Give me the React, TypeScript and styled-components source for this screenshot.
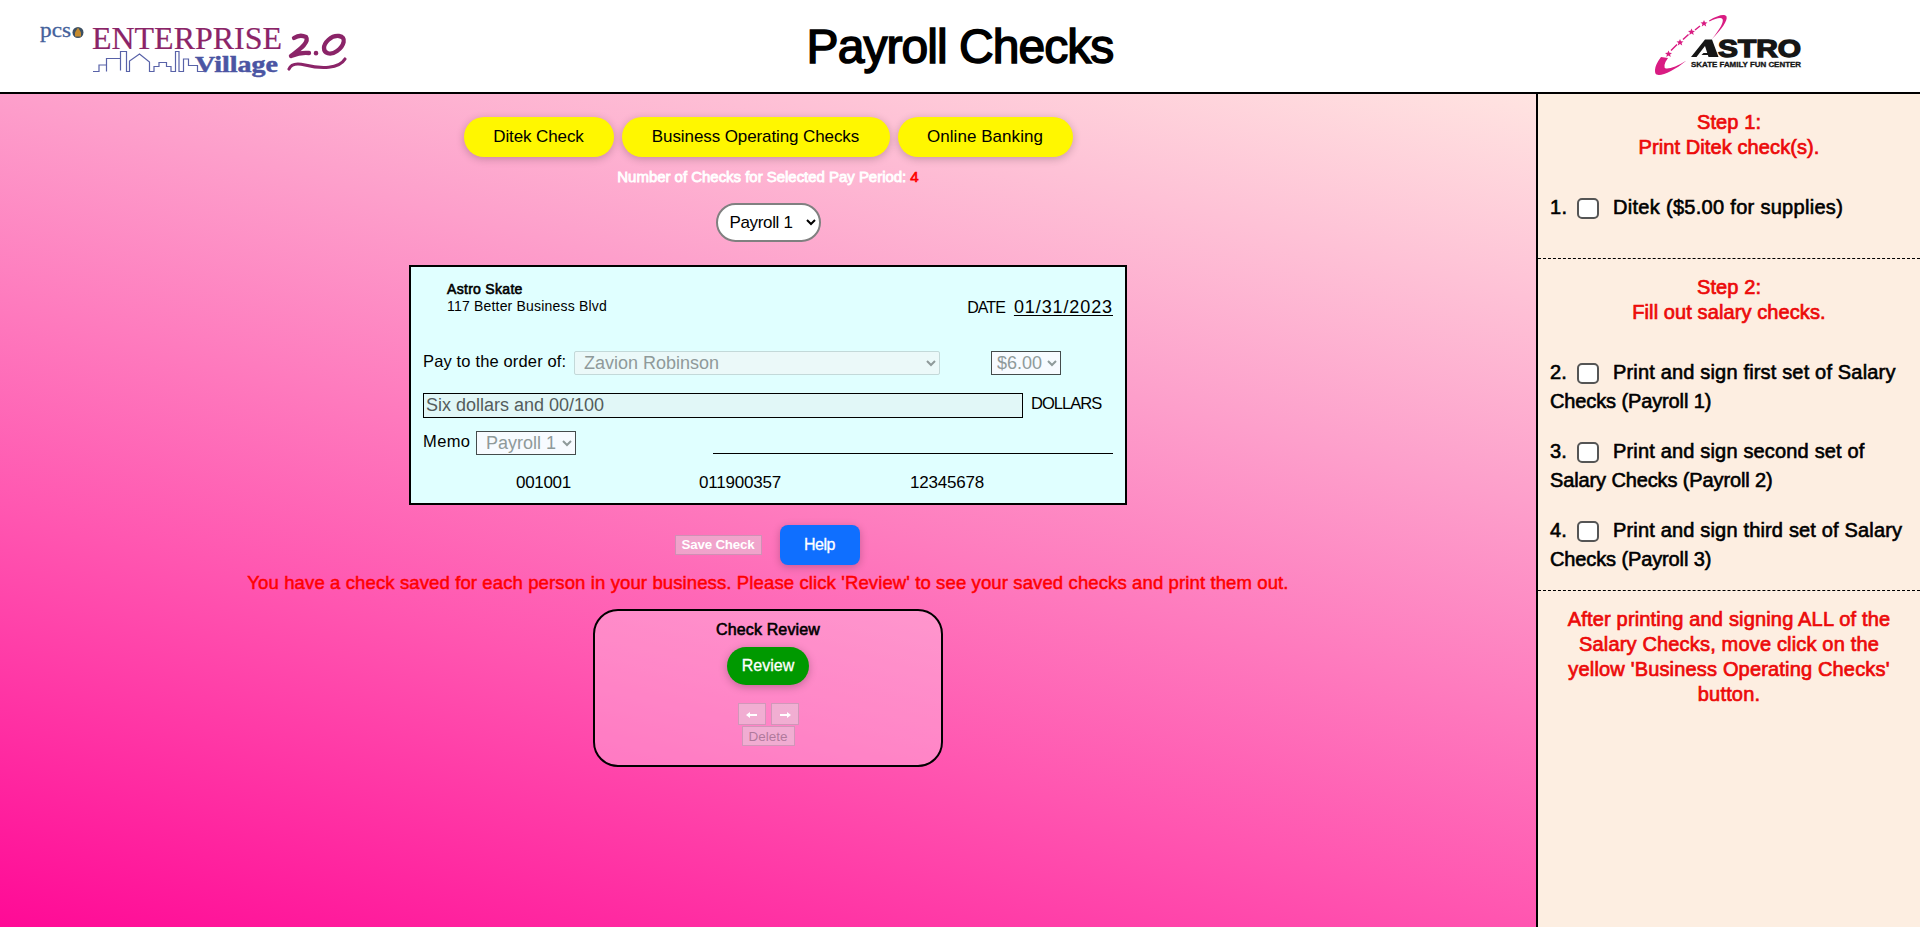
import React from 'react';
import styled, { createGlobalStyle } from 'styled-components';

const Global = createGlobalStyle`
  * { box-sizing: border-box; }
  body { margin: 0; font-family: "Liberation Sans", Arial, sans-serif; color: #000; }
  button, select, input { font-family: inherit; margin: 0; }
`;

const Page = styled.div`
  height: 927px;
  display: flex;
  flex-direction: column;
  overflow: hidden;
`;
const Header = styled.header`
  height: 94px;
  flex: none;
  background: #fff;
  border-bottom: 2px solid #000;
  display: grid;
  grid-template-columns: 400px 1fr 400px;
`;
const Title = styled.h1`
  margin: 0;
  text-align: center;
  font-size: 48px;
  line-height: 94px;
  font-weight: 400;
  letter-spacing: -0.95px;
  -webkit-text-stroke: 1.5px #000;
`;
const Body = styled.div`
  flex: 1;
  display: grid;
  grid-template-columns: 1536px 1fr;
`;
const Main = styled.main`
  background: linear-gradient(15deg, #ff0a96 0%, #ff55b0 33%, #fd9fcb 67%, #ffe4e1 100%);
  display: flex;
  flex-direction: column;
  align-items: center;
`;
const TopButtons = styled.div`
  display: flex;
  gap: 8px;
  margin-top: 23px;
`;
const Pill = styled.button<{ $w: number; $ls: number }>`
  width: ${p => p.$w}px;
  height: 40px;
  padding: 0;
  border: 0;
  border-radius: 20px;
  background: #fff700;
  color: #000;
  font-size: 17px;
  letter-spacing: ${p => p.$ls}px;
  box-shadow: 0 2px 8px rgba(0, 0, 0, 0.22);
  white-space: nowrap;
`;
const Count = styled.div`
  margin-top: 9px;
  height: 22px;
  line-height: 22px;
  font-size: 15px;
  letter-spacing: -0.03px;
  color: #fff;
  -webkit-text-stroke: 0.8px currentColor;
  white-space: nowrap;
  span { color: red; -webkit-text-stroke: 0.7px red; }
`;
const PeriodSelect = styled.select`
  margin-top: 15px;
  width: 105px;
  height: 39px;
  border: 2px solid #808080;
  border-radius: 20px;
  background: #fff;
  font-size: 17px;
  letter-spacing: -0.35px;
  padding: 0 0 0 8px;
  color: #000;
`;
const Check = styled.section`
  margin-top: 23px;
  width: 718px;
  height: 240px;
  border: 2px solid #000;
  background: #e0ffff;
  padding: 14px 12px 0;
  display: flex;
  flex-direction: column;
`;
const Row = styled.div<{ $h: number; $mt?: number }>`
  display: flex;
  align-items: flex-start;
  height: ${p => p.$h}px;
  margin-top: ${p => p.$mt ?? 0}px;
  flex: none;
`;
const Payer = styled.div`
  padding-left: 24px;
  font-size: 14px;
  line-height: 17px;
  letter-spacing: 0.19px;
  flex: 1;
  strong { display: block; font-weight: 400; letter-spacing: 0.3px; -webkit-text-stroke: 0.6px #000; }
`;
const DateBox = styled.div`
  padding-top: 16px;
  font-size: 17px;
  line-height: 20px;
  white-space: nowrap;
  small { font-size: 16px; letter-spacing: -0.95px; margin-right: 9px; }
  u { font-size: 18px; text-underline-offset: 2px; letter-spacing: 0.9px; }
`;
const Label = styled.span<{ $w: number; $ls: number }>`
  width: ${p => p.$w}px;
  flex: none;
  font-size: 16.5px;
  line-height: 20px;
  letter-spacing: ${p => p.$ls}px;
  white-space: nowrap;
`;
const Field = styled.select<{ $w: number; $plain?: boolean; $pad: number; $ml?: number }>`
  width: ${p => p.$w}px;
  height: 24px;
  margin-left: ${p => p.$ml ?? 0}px;
  padding: 0 0 0 ${p => p.$pad}px;
  border: 1px solid ${p => (p.$plain ? '#c3d9d9' : '#444c4c')};
  border-radius: ${p => (p.$plain ? 2 : 0)}px;
  background: ${p => (p.$plain ? '#ebf9f9' : '#f7fbff')};
  font-size: 18px;
  color: #8f9a9a;
  opacity: 1;
`;
const Words = styled.input`
  width: 600px;
  height: 25px;
  border: 1px solid #000;
  background: #e1f7f7;
  padding: 0 2px;
  font-size: 18px;
  color: #545c5c;
  margin-right: 8px;
`;
const Signature = styled.div`
  flex: 1;
  height: 23px;
  margin-left: 137px;
  border-bottom: 1px solid #000;
`;
const Numbers = styled.div`
  display: flex;
  margin-top: 18px;
  font-size: 17px;
  line-height: 20px;
  letter-spacing: -0.2px;
  span:nth-child(1) { width: 183px; margin-left: 93px; letter-spacing: -0.3px; }
  span:nth-child(2) { width: 211px; }
`;
const Actions = styled.div`
  display: flex;
  align-items: center;
  gap: 18px;
  margin: 19px 2px 0 0;
  height: 41px;
`;
const Muted = styled.button<{ $w: number; $h: number; $strong?: boolean }>`
  width: ${p => p.$w}px;
  height: ${p => p.$h}px;
  padding: 0;
  display: flex;
  align-items: center;
  justify-content: center;
  border: 1px solid rgba(150, 110, 140, 0.35);
  background: rgba(225, 225, 225, 0.45);
  color: ${p => (p.$strong ? '#fff' : 'rgba(110, 70, 100, 0.5)')};
  font-size: ${p => (p.$strong ? 13.33 : 13.5)}px;
  letter-spacing: ${p => (p.$strong ? -0.2 : 0)}px;
  font-weight: ${p => (p.$strong ? 700 : 400)};
`;
const Help = styled.button`
  width: 80px;
  height: 40px;
  border: 0;
  border-radius: 8px;
  background: #0f6fff;
  color: #fff;
  font-size: 16px;
  letter-spacing: -0.5px;
  -webkit-text-stroke: 0.3px #fff;
  box-shadow: 0 2px 8px rgba(0, 0, 0, 0.22);
`;
const Message = styled.div`
  margin-top: 5px;
  height: 26px;
  line-height: 26px;
  color: red;
  font-size: 18.5px;
  -webkit-text-stroke: 0.5px red;
  letter-spacing: 0.12px;
  white-space: nowrap;
`;
const Review = styled.section`
  margin-top: 13px;
  width: 350px;
  height: 158px;
  border: 2px solid #000;
  border-radius: 25px;
  background: rgba(255, 220, 240, 0.35);
  display: flex;
  flex-direction: column;
  align-items: center;
`;
const ReviewTitle = styled.div`
  margin-top: 8px;
  line-height: 22px;
  font-size: 16px;
  letter-spacing: 0.15px;
  -webkit-text-stroke: 0.6px #000;
`;
const ReviewButton = styled.button`
  margin-top: 6px;
  width: 82px;
  height: 38px;
  border: 0;
  border-radius: 19px;
  background: #009900;
  color: #fff;
  font-size: 16px;
  -webkit-text-stroke: 0.3px #fff;
  box-shadow: 0 2px 8px rgba(0, 0, 0, 0.25);
`;
const Arrows = styled.div`
  display: flex;
  gap: 5px;
  margin: 18px 0 1px;
`;
const Aside = styled.aside`
  background: #fdeee1;
  border-left: 2px solid #000;
`;
const Section = styled.section<{ $h?: number }>`
  height: ${p => (p.$h ? p.$h + 'px' : 'auto')};
  padding: 16px 12px 0 12px;
  border-bottom: ${p => (p.$h ? '1px dashed #000' : '0')};
`;
const StepTitle = styled.h2<{ $ls: number }>`
  margin: 0;
  text-align: center;
  color: #ec0a0a;
  font-size: 20px;
  line-height: 25px;
  font-weight: 400;
  letter-spacing: ${p => p.$ls}px;
  -webkit-text-stroke: 0.7px #ec0a0a;
  white-space: nowrap;
`;
const Task = styled.div<{ $mt: number; $ls?: number }>`
  margin-top: ${p => p.$mt}px;
  height: 58px;
  font-size: 20px;
  line-height: 29px;
  letter-spacing: ${p => p.$ls ?? 0}px;
  -webkit-text-stroke: 0.6px #000;
  white-space: nowrap;
`;
const TaskLine = styled.div<{ $ls: number }>`
  display: flex;
  align-items: center;
  letter-spacing: ${p => p.$ls}px;
`;
const Num = styled.span`
  width: 27px;
`;
const Box = styled.input`
  appearance: none;
  width: 22px;
  height: 21px;
  margin: 2px 14px 0 0;
  border: 2px solid #555;
  border-radius: 5px;
  background: #fff;
`;

const VillageLogo = () => (
  <svg width="400" height="92" viewBox="0 0 400 92">
    <g fontFamily='"Liberation Serif", serif'>
      <text x="40" y="37" fontSize="22" fill="#44619b" stroke="#44619b" strokeWidth=".3" textLength="31" lengthAdjust="spacingAndGlyphs">pcs</text>
      <text x="92" y="48.500" fontSize="31" fill="#8b2468" stroke="#8b2468" strokeWidth=".2" textLength="190" lengthAdjust="spacingAndGlyphs">ENTERPRISE</text>
      <text x="195" y="71.500" fontSize="24" fontWeight="700" fill="#4b55a3" stroke="#4b55a3" strokeWidth=".5" textLength="83" lengthAdjust="spacingAndGlyphs">Village</text>
    </g>
    <circle cx="78" cy="32.5" r="5.5" fill="#3b4f63" />
    <path d="M78 27.5l3 5v4h-6v-4z" fill="#c58b2e" />
    <path d="M93 71.500h6v-6.500h7.500v6.500V58.500h14v12V51.500h6v20h3V61l10-7 10 8v9.500h4.500v-5h5v-4h7.500v4h4.500v5h4.500v-20h3.500v20h4.500V59h5v6.500h9v6h7" fill="none" stroke="#5862a8" strokeWidth="1.200" />
    <g fill="none" stroke="#8b2468" strokeLinecap="round" strokeLinejoin="round">
      <path d="M294 38q6-4 12-1c4 6-9 14-15 19q10-4 18-3" strokeWidth="4.300" />
      <path d="M316 53v.2" strokeWidth="4.500" />
      <path d="M339 36c-8-1-15 7-15 12s6 8 13 3 10-14 2-15z" strokeWidth="4.300" />
      <path d="M289 69c2-5 8-6 16-4 16 4 34 4 40-6" strokeWidth="3.200" />
    </g>
  </svg>
);

const star = 'M0-3.600 1-1.200 3.500-1.100 1.600.5 2.200 3 0 1.600-2.200 3-1.600.5-3.500-1.100-1-1.200z';

const AstroLogo = () => (
  <svg width="400" height="92" viewBox="1520 0 400 92">
    <g fill="#d91c82">
      <path d="M1686.500 60.500c-11 7-20 9.500-22.500 7-1.500-2 0-6.500 2.500-9.500h-3.500c-5 6-9 12-7.500 15.500 2.500 4.500 18-2 31-13z" />
      <path d="M1661 57q-6 8-6 13t7 4l4-4q-4-4 2-12z" />
      <path d="M1709 20.500c9-5.500 16-7 17.500-4 1.500 4-5 13-14.500 22.500 8-10 12-17 10.500-20-1.500-2-7-.5-13 2.500z" />
      {[[1668.500, 54], [1680, 42.500], [1691.500, 32], [1704, 23.500]].map(([x, y]) => (
        <path key={x} d={star} transform={`translate(${x} ${y})`} />
      ))}
    </g>
    <path d="M1671 50.500l6-6M1683 39.500l5.500-5M1695 30l5-4" stroke="#d91c82" strokeWidth="1.500" />
    <path d="M1691 57l14-17.500h7l6.500 17.500h-10l-3.500-11-8.500 11z" fill="#161616" />
    <path d="M1703.500 53h8v2h-10z" fill="#161616" />
    <g fill="#161616" fontFamily='"Liberation Sans", Arial, sans-serif' fontWeight="700">
      <text x="1718" y="56.700" fontSize="23.500" stroke="#161616" strokeWidth="1.300" textLength="83" lengthAdjust="spacingAndGlyphs">STRO</text>
      <text x="1691" y="66.800" fontSize="6.800" stroke="#161616" strokeWidth=".3" textLength="110" lengthAdjust="spacingAndGlyphs">SKATE FAMILY FUN CENTER</text>
    </g>
  </svg>
);

const ArrowIcon = styled.svg<{ $flip?: boolean }>`
  transform: ${p => (p.$flip ? 'scaleX(-1)' : 'none')};
  margin-top: 2px;
`;
const Arrow = ({ flip }: { flip?: boolean }) => (
  <ArrowIcon $flip={flip} width="12" height="8" viewBox="0 0 12 8">
    <path d="M0 4l4-3v2h7v2H4v2z" fill="#fff" />
  </ArrowIcon>
);

const tasks = [
  ['2.', 'Print and sign first set of Salary', 'Checks (Payroll 1)'],
  ['3.', 'Print and sign second set of', 'Salary Checks (Payroll 2)'],
  ['4.', 'Print and sign third set of Salary', 'Checks (Payroll 3)'],
];

export default function App() {
  return (
    <Page>
      <Global />
      <Header>
        <VillageLogo />
        <Title>Payroll Checks</Title>
        <AstroLogo />
      </Header>
      <Body>
        <Main>
          <TopButtons>
            <Pill $w={150} $ls={-0.1}>Ditek Check</Pill>
            <Pill $w={268} $ls={-0.1}>Business Operating Checks</Pill>
            <Pill $w={175} $ls={0.05}>Online Banking</Pill>
          </TopButtons>
          <Count>Number of Checks for Selected Pay Period: <span>4</span></Count>
          <PeriodSelect><option>Payroll 1</option></PeriodSelect>
          <Check>
            <Row $h={70}>
              <Payer><strong>Astro Skate</strong>117 Better Business Blvd</Payer>
              <DateBox><small>DATE</small><u>01/31/2023</u></DateBox>
            </Row>
            <Row $h={42}>
              <Label $w={151} $ls={0.15}>Pay to the order of:</Label>
              <Field $w={366} $pad={5} $plain disabled><option>Zavion Robinson</option></Field>
              <Field $w={70} $pad={1} $ml={51} disabled><option>$6.00</option></Field>
            </Row>
            <Row $h={38}>
              <Words readOnly value="Six dollars and 00/100" />
              <Label $w={80} $ls={-0.95}>DOLLARS</Label>
            </Row>
            <Row $h={24}>
              <Label $w={53} $ls={0.4}>Memo</Label>
              <Field $w={100} $pad={5} disabled><option>Payroll 1</option></Field>
              <Signature />
            </Row>
            <Numbers><span>001001</span><span>011900357</span><span>12345678</span></Numbers>
          </Check>
          <Actions>
            <Muted $w={87} $h={20} $strong>Save Check</Muted>
            <Help>Help</Help>
          </Actions>
          <Message>You have a check saved for each person in your business. Please click 'Review' to see your saved checks and print them out.</Message>
          <Review>
            <ReviewTitle>Check Review</ReviewTitle>
            <ReviewButton>Review</ReviewButton>
            <Arrows>
              <Muted $w={28} $h={22} $strong aria-label="Previous"><Arrow /></Muted>
              <Muted $w={28} $h={22} $strong aria-label="Next"><Arrow flip /></Muted>
            </Arrows>
            <Muted $w={53} $h={20}>Delete</Muted>
          </Review>
        </Main>
        <Aside>
          <Section $h={165}>
            <StepTitle $ls={0.1}>Step 1:<br />Print Ditek check(s).</StepTitle>
            <Task $mt={33}>
              <TaskLine $ls={0.3}><Num>1.</Num><Box type="checkbox" />Ditek ($5.00 for supplies)</TaskLine>
            </Task>
          </Section>
          <Section $h={332}>
            <StepTitle $ls={0.1}>Step 2:<br />Fill out salary checks.</StepTitle>
            {tasks.map(([n, a, b], i) => (
              <Task key={n} $mt={i ? 21 : 33} $ls={-0.12}>
                <TaskLine $ls={0.17}><Num>{n}</Num><Box type="checkbox" />{a}</TaskLine>
                {b}
              </Task>
            ))}
          </Section>
          <Section>
            <StepTitle $ls={0.17}>
              After printing and signing ALL of the<br />Salary Checks, move click on the<br />yellow 'Business Operating Checks'<br />button.
            </StepTitle>
          </Section>
        </Aside>
      </Body>
    </Page>
  );
}
